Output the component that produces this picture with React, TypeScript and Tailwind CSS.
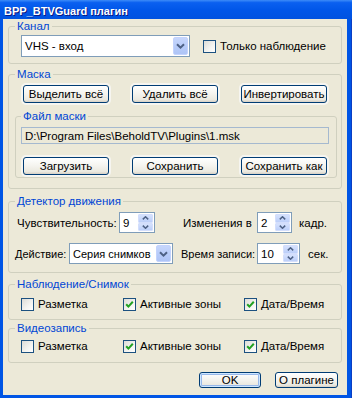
import React from 'react'

const Chevron = ({ up = false, small = false }: { up?: boolean; small?: boolean }) => (
  <svg
    width={small ? 7 : 9}
    height={small ? 4 : 6}
    viewBox={small ? '0 0 7 4' : '0 0 9 6'}
    className={up ? 'rotate-180' : ''}
  >
    {small ? (
      <path d="M0.8 0.6 L3.5 3.2 L6.2 0.6" fill="none" stroke="#4d6185" strokeWidth="1.5" />
    ) : (
      <path d="M1 1.2 L4.5 4.6 L8 1.2" fill="none" stroke="#4d6185" strokeWidth="2" />
    )}
  </svg>
)

const XpButton = ({
  children,
  className = '',
  halo = false,
  isDefault = false,
}: {
  children: React.ReactNode
  className?: string
  halo?: boolean
  isDefault?: boolean
}) => (
  <button
    className={`flex items-center justify-center rounded-[3px] border border-[#003c74] bg-[linear-gradient(to_bottom,#ffffff_0%,#f4f3ee_50%,#ebe9e0_85%,#d6d0c5_100%)] text-black text-[11.5px] leading-[14px] ${
      halo ? 'shadow-[0_0_0_2px_#f6f5f0]' : ''
    } ${isDefault ? 'shadow-[inset_0_0_0_1px_#cee7ff,inset_0_0_0_2px_#98b8ea]' : ''} ${className}`}
  >
    {children}
  </button>
)

const Checkbox = ({ label, checked = false, className = '' }: { label: string; checked?: boolean; className?: string }) => (
  <div className={`flex items-center ${className}`}>
    <div className="w-[13px] h-[13px] shrink-0 border border-[#1c5180] bg-[linear-gradient(135deg,#dcdcd7_0%,#f4f4f1_60%,#ffffff_100%)] flex items-center justify-center">
      {checked && (
        <svg width="9" height="9" viewBox="0 0 9 9">
          <path d="M1.2 4.2 L3.4 6.6 L7.8 1.8" fill="none" stroke="#21a121" strokeWidth="2" />
        </svg>
      )}
    </div>
    <span className="ml-[4px] whitespace-nowrap">{label}</span>
  </div>
)

const Combo = ({ value, className = '' }: { value: string; className?: string }) => (
  <div className={`flex items-stretch border border-[#7f9db9] bg-white ${className}`}>
    <span className="flex-1 flex items-center pl-[3px] whitespace-nowrap overflow-hidden">{value}</span>
    <div className="p-[1px] flex">
      <div className="w-[15px] rounded-[2px] border border-[#c3d3fd] bg-[linear-gradient(to_bottom,#c6d6fc_0%,#b6cbf9_60%,#aec4f6_100%)] flex items-center justify-center">
        <Chevron />
      </div>
    </div>
  </div>
)

const Spinner = ({ value, className = '' }: { value: string; className?: string }) => (
  <div className={`flex items-stretch border border-[#7f9db9] bg-white h-[21px] ${className}`}>
    <span className="flex-1 flex items-center pl-[3px]">{value}</span>
    <div className="w-[15px] py-[1px] pr-[1px] flex flex-col box-content">
      <div className="flex-1 rounded-[1px] border border-[#d3defc] bg-[linear-gradient(to_bottom,#d5e1fd_0%,#bccff9_100%)] flex items-center justify-center">
        <Chevron up small />
      </div>
      <div className="flex-1 rounded-[1px] border border-[#d3defc] bg-[linear-gradient(to_bottom,#d5e1fd_0%,#bccff9_100%)] flex items-center justify-center">
        <Chevron small />
      </div>
    </div>
  </div>
)

const Legend = ({ children, className = 'ml-[6px]' }: { children: React.ReactNode; className?: string }) => (
  <legend className={`px-[2px] leading-[14px] text-[#0046d5] ${className}`}>{children}</legend>
)

const Group = 'border border-[#d0d0bf] rounded-[3px]'

export default function App() {
  return (
    <div className="w-[352px] h-[398px] flex flex-col bg-[#0055e5] overflow-hidden text-[11.5px] leading-[14px] text-black font-['Liberation_Sans',Arial,sans-serif]">
      {/* title bar */}
      <div className="h-[19px] shrink-0 pl-[4px] pt-[4px] text-white text-[11px] font-bold leading-[14px] bg-[linear-gradient(to_bottom,#3d8cf8_0%,#0a60f0_14%,#0056e8_55%,#0052e0_100%)] [text-shadow:1px_1px_0_#0a1883]">
        BPP_BTVGuard плагин
      </div>

      <div className="flex-1 flex pl-[3px] pr-[4px] pb-[3px] border-r border-[#0a3ec4]">
        <div className="flex-1 bg-[#ece9d8] flex flex-col px-[5px]">
          {/* Канал */}
          <fieldset className={`${Group} pb-[6px]`}>
            <Legend>Канал</Legend>
            <div className="mt-[2px] ml-[12px] flex items-center">
              <Combo value="VHS - вход" className="w-[169px] h-[22px]" />
              <Checkbox label="Только наблюдение" className="ml-[13px]" />
            </div>
          </fieldset>

          {/* Маска */}
          <fieldset className={`${Group} mt-[3px] pb-[10px]`}>
            <Legend>Маска</Legend>
            <div className="mt-[4px] ml-[14px] mr-[14px] flex justify-between">
              <XpButton halo className="w-[86px] h-[18px]">Выделить всё</XpButton>
              <XpButton halo className="w-[86px] h-[18px]">Удалить всё</XpButton>
              <XpButton halo className="w-[86px] h-[18px]">Инвертировать</XpButton>
            </div>

            <fieldset className={`${Group} mt-[6px] ml-[6px] mr-[4px] pb-[2px]`}>
              <Legend className="ml-[5px]">Файл маски</Legend>
              <div className="mt-[4px] ml-[5px] w-[308px] h-[17px] border border-[#a5b9cf] bg-[#ece9d8] flex items-center pl-[3px] whitespace-nowrap">
                D:\Program Files\BeholdTV\Plugins\1.msk
              </div>
              <div className="mt-[13px] ml-[7px] mr-[9px] flex justify-between">
                <XpButton halo className="w-[86px] h-[18px]">Загрузить</XpButton>
                <XpButton halo className="w-[86px] h-[18px]">Сохранить</XpButton>
                <XpButton halo className="w-[86px] h-[18px]">Сохранить как</XpButton>
              </div>
            </fieldset>
          </fieldset>

          {/* Детектор движения */}
          <fieldset className={`${Group} mt-[5px] pb-[8px]`}>
            <Legend>Детектор движения</Legend>
            <div className="mt-[4px] ml-[8px] flex items-center h-[21px]">
              <span className="w-[102px] whitespace-nowrap">Чувствительность:</span>
              <Spinner value="9" className="w-[36px]" />
              <span className="ml-[28px] w-[74px] whitespace-nowrap">Изменения в</span>
              <Spinner value="2" className="w-[35px]" />
              <span className="ml-[7px]">кадр.</span>
            </div>
            <div className="mt-[10px] ml-[6px] flex items-center h-[21px]">
              <span className="w-[54px] whitespace-nowrap text-[11px]">Действие:</span>
              <Combo value="Серия снимков" className="w-[104px] h-[21px] text-[11px]" />
              <span className="ml-[8px] w-[76px] whitespace-nowrap text-[11px]">Время записи:</span>
              <Spinner value="10" className="w-[43px]" />
              <span className="ml-[8px]">сек.</span>
            </div>
          </fieldset>

          {/* Наблюдение/Снимок */}
          <fieldset className={`${Group} mt-[4px] pb-[8px]`}>
            <Legend>Наблюдение/Снимок</Legend>
            <div className="mt-[6px] ml-[12px] flex items-center">
              <Checkbox label="Разметка" className="w-[102px]" />
              <Checkbox label="Активные зоны" checked className="w-[121px]" />
              <Checkbox label="Дата/Время" checked />
            </div>
          </fieldset>

          {/* Видеозапись */}
          <fieldset className={`${Group} mt-[1px] pb-[9px]`}>
            <Legend>Видеозапись</Legend>
            <div className="mt-[4px] ml-[12px] flex items-center">
              <Checkbox label="Разметка" className="w-[102px]" />
              <Checkbox label="Активные зоны" checked className="w-[121px]" />
              <Checkbox label="Дата/Время" checked />
            </div>
          </fieldset>

          <div className="mt-[9px] pr-[4px] flex justify-end gap-[14px]">
            <XpButton isDefault className="w-[62px] h-[16px]">OK</XpButton>
            <XpButton className="w-[63px] h-[16px]">О плагине</XpButton>
          </div>
        </div>
      </div>
    </div>
  )
}
